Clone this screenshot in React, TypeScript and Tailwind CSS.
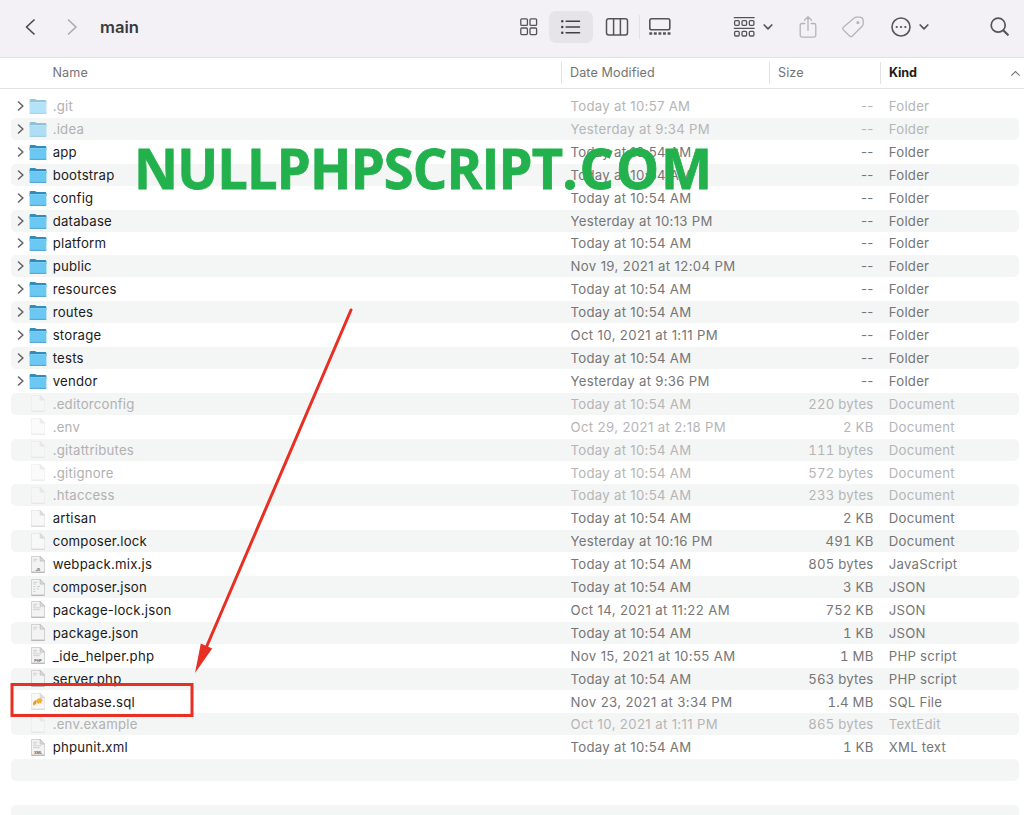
import React from "react";

type Badge = "" | "JS" | "JSON" | "LOCK" | "PHP" | "XML" | "SQL" | "CODE" | "DOC";
type Entry = {
  name: string;
  date: string;
  size: string;
  kind: string;
  dim?: boolean;
  badge?: Badge;
};

const T = "Today at 10:54 AM";

const entries: Entry[] = [
  { name: ".git", date: "Today at 10:57 AM", size: "--", kind: "Folder", dim: true },
  { name: ".idea", date: "Yesterday at 9:34 PM", size: "--", kind: "Folder", dim: true },
  { name: "app", date: T, size: "--", kind: "Folder" },
  { name: "bootstrap", date: T, size: "--", kind: "Folder" },
  { name: "config", date: T, size: "--", kind: "Folder" },
  { name: "database", date: "Yesterday at 10:13 PM", size: "--", kind: "Folder" },
  { name: "platform", date: T, size: "--", kind: "Folder" },
  { name: "public", date: "Nov 19, 2021 at 12:04 PM", size: "--", kind: "Folder" },
  { name: "resources", date: T, size: "--", kind: "Folder" },
  { name: "routes", date: T, size: "--", kind: "Folder" },
  { name: "storage", date: "Oct 10, 2021 at 1:11 PM", size: "--", kind: "Folder" },
  { name: "tests", date: T, size: "--", kind: "Folder" },
  { name: "vendor", date: "Yesterday at 9:36 PM", size: "--", kind: "Folder" },
  { name: ".editorconfig", date: T, size: "220 bytes", kind: "Document", dim: true },
  { name: ".env", date: "Oct 29, 2021 at 2:18 PM", size: "2 KB", kind: "Document", dim: true },
  { name: ".gitattributes", date: T, size: "111 bytes", kind: "Document", dim: true },
  { name: ".gitignore", date: T, size: "572 bytes", kind: "Document", dim: true },
  { name: ".htaccess", date: T, size: "233 bytes", kind: "Document", dim: true },
  { name: "artisan", date: T, size: "2 KB", kind: "Document" },
  { name: "composer.lock", date: "Yesterday at 10:16 PM", size: "491 KB", kind: "Document" },
  { name: "webpack.mix.js", date: T, size: "805 bytes", kind: "JavaScript", badge: "JS" },
  { name: "composer.json", date: T, size: "3 KB", kind: "JSON", badge: "JSON" },
  { name: "package-lock.json", date: "Oct 14, 2021 at 11:22 AM", size: "752 KB", kind: "JSON", badge: "LOCK" },
  { name: "package.json", date: T, size: "1 KB", kind: "JSON", badge: "DOC" },
  { name: "_ide_helper.php", date: "Nov 15, 2021 at 10:55 AM", size: "1 MB", kind: "PHP script", badge: "PHP" },
  { name: "server.php", date: T, size: "563 bytes", kind: "PHP script", badge: "CODE" },
  { name: "database.sql", date: "Nov 23, 2021 at 3:34 PM", size: "1.4 MB", kind: "SQL File", badge: "SQL" },
  { name: ".env.example", date: "Oct 10, 2021 at 1:11 PM", size: "865 bytes", kind: "TextEdit", dim: true },
  { name: "phpunit.xml", date: T, size: "1 KB", kind: "XML text", badge: "XML" },
];

function FolderIcon({ dim }: { dim?: boolean }) {
  return (
    <svg width="18" height="17" viewBox="0 0 18 17" className={dim ? "opacity-50" : ""}>
      <path d="M.6 2.2Q.6 1 1.8 1h4.1q.6 0 1 .4l.6.6h8.700q1.200 0 1.200 1.200V6H.6Z" fill="#2f8dbd" />
      <path d="M.6 4.300h16.800v10.400q0 1-1 1H1.600q-1 0-1-1Z" fill="#6ac8f3" />
      <path d="M.6 4.500h16.800" stroke="#8fd7f8" strokeWidth=".7" />
      <path d="M.7 15.400h16.600" stroke="#4b9fca" strokeWidth=".9" />
    </svg>
  );
}

function FileIcon({ badge = "", dim }: { badge?: Badge; dim?: boolean }) {
  const detailed = badge !== "" && badge !== "SQL";
  return (
    <svg width="16" height="19" viewBox="0 0 16 19" className={dim ? "opacity-50" : ""}>
      <path
        d="M1.500 1.500h8.800l4.200 4.500v11.200H1.500Z"
        fill={detailed ? "#f3f3f3" : "#f8f8f8"}
        stroke={detailed ? "#c9c9c9" : "#e4e4e4"}
        strokeWidth=".8"
      />
      <path d="M1.300 17.300h13.400" stroke={detailed ? "#a5a5a5" : "#cfcfcf"} strokeWidth=".8" />
      <path d="M10.200 1.500v4.600h4.300Z" fill="#dedede" stroke={detailed ? "#b5b5b5" : "#d2d2d2"} strokeWidth=".7" />
      {detailed && <path d="M3.200 4.300h4M3.200 6h3" stroke="#c2c2c2" strokeWidth=".7" />}
      {(badge === "LOCK" || badge === "PHP" || badge === "XML") && (
        <path d="M3.200 7.800h8M3.200 9.600h6.500" stroke="#c9c9c9" strokeWidth=".8" />
      )}
      {badge === "JSON" && <path d="M3.400 8.500h2M3.400 11h2M3.400 13.500h2M7 8.500h3M7 11h2" stroke="#c4c4c4" strokeWidth=".8" />}
      {(badge === "JS" || badge === "PHP" || badge === "XML") && (
        <text
          x="8"
          y="15.600"
          textAnchor="middle"
          fontSize="3.600"
          fontWeight="700"
          fill="#666666"
          fontFamily="Inter, sans-serif"
        >
          {badge}
        </text>
      )}
      {badge === "SQL" && (
        <>
          <path d="M3 12.600q-.2-3.600 3-4.700l1 1.300-.9 1.800.4 1.600-1.500-.4-.9 1.500Z" fill="#f29a1f" />
          <path d="M6.300 8.300q2-3 5-1.700l1.700 1.900-1.500.5-.3 2.700-1.400-1.300-1.400 1.500-1.400-1.700Z" fill="#f5b131" />
          <path d="M7 9.500l1.500 1.500M10 8.500l1 1" stroke="#e38b1c" strokeWidth=".8" />
        </>
      )}
    </svg>
  );
}

function Row({ entry, index }: { entry?: Entry; index: number }) {
  const stripe = index % 2 === 1 ? "bg-[#f4f5f5]" : "";
  const folder = entry?.kind === "Folder";
  const meta = entry?.dim ? "text-[#b5b5b5]" : "text-[#767676]";
  const dateTracking = entry?.date.includes("2021") ? "tracking-[0.360px]" : "tracking-[0.290px]";
  return (
    <div className="h-[22.910px] shrink-0">
      <div className={`flex h-[22px] items-center rounded-[5px] ${stripe}`}>
        {entry && (
          <>
            <div className="flex w-[18px] items-center pl-[6px]">
              {folder && (
                <svg width="8" height="12" viewBox="0 0 8 12" fill="none" stroke="#646467" strokeWidth="1.600" strokeLinecap="round" strokeLinejoin="round">
                  <path d="M1.500 2l4.400 4-4.400 4" />
                </svg>
              )}
            </div>
            <div className="flex w-[23.700px] justify-start">
              {folder ? (
                <span className="pt-px">
                  <FolderIcon dim={entry.dim} />
                </span>
              ) : (
                <span className="pl-[1px]">
                  <FileIcon badge={entry.badge} dim={entry.dim} />
                </span>
              )}
            </div>
            <div className={`w-[517.800px] tracking-[0.220px] ${entry.dim ? "text-[#b1b1b1]" : "text-[#1b1b1b]"}`}>{entry.name}</div>
            <div className={`w-[203px] ${dateTracking} ${meta}`}>{entry.date}</div>
            <div className={`w-[100px] text-right tracking-[0.200px] ${folder ? "" : "tabular-nums"} ${meta}`}>{entry.size}</div>
            <div className={`pl-[15.300px] tracking-[0.230px] ${meta}`}>{entry.kind}</div>
          </>
        )}
      </div>
    </div>
  );
}

function ChevronDown() {
  return (
    <svg width="10" height="8" viewBox="0 0 10 8" fill="none" stroke="#555459" strokeWidth="1.700" strokeLinecap="round" strokeLinejoin="round">
      <path d="M1.200 2l3.800 3.800L8.800 2" />
    </svg>
  );
}

function Toolbar() {
  return (
    <header className="flex h-[57px] shrink-0 items-center bg-[#f3f1f6] pb-[3px]">
      <svg className="ml-[24px]" width="12" height="18" viewBox="0 0 12 18" fill="none" stroke="#4b4a4f" strokeWidth="1.700" strokeLinecap="round" strokeLinejoin="round">
        <path d="M10 2L2.500 9l7.500 7" />
      </svg>
      <svg className="ml-[30px]" width="12" height="18" viewBox="0 0 12 18" fill="none" stroke="#acabb0" strokeWidth="1.700" strokeLinecap="round" strokeLinejoin="round">
        <path d="M2.500 2l7.500 7-7.500 7" />
      </svg>
      <h1 className="ml-[22px] w-[419px] text-[16.600px] font-semibold leading-5 text-[#39383d]">main</h1>

      <svg width="20" height="20" viewBox="0 0 20 20" fill="none" stroke="#555459" strokeWidth="1.300">
        <rect x="1.800" y="1.800" width="6.600" height="6.600" rx="1" />
        <rect x="11" y="1.800" width="6.600" height="6.600" rx="1" />
        <rect x="1.800" y="11" width="6.600" height="6.600" rx="1" />
        <rect x="11" y="11" width="6.600" height="6.600" rx="1" />
      </svg>
      <div className="ml-[10px] flex h-[32px] w-[44px] items-center justify-center rounded-[7px] bg-[#e6e4e9]">
        <svg width="22" height="18" viewBox="0 0 22 18" fill="none" stroke="#414045" strokeWidth="1.600" strokeLinecap="round">
          <path d="M6.200 3.200h13.300M6.200 9h13.300M6.200 14.800h13.300" />
          <path d="M2.200 3.200h.1M2.200 9h.1M2.200 14.800h.1" strokeWidth="2.400" />
        </svg>
      </div>
      <svg className="ml-[12px]" width="24" height="20" viewBox="0 0 24 20" fill="none" stroke="#555459" strokeWidth="1.500">
        <rect x="1.500" y="1.700" width="21" height="16.300" rx="2.200" />
        <path d="M8.600 2v16M15.400 2v16" />
      </svg>
      <div className="ml-[10px] h-[24px] w-px bg-[#e3e1e6]" />
      <svg className="ml-[8px]" width="24" height="20" viewBox="0 0 24 20" fill="none" stroke="#555459" strokeWidth="1.600">
        <rect x="1.800" y="1.800" width="20" height="11" rx="1.800" />
        <path d="M1.300 16.500h21.200" strokeWidth="2.500" strokeDasharray="2.900 1.670" />
      </svg>
      <svg className="ml-[60px]" width="24" height="22" viewBox="0 0 24 22" fill="none" stroke="#555459" strokeWidth="1.300">
        <path d="M1.800 1.600h20.800M1.800 12.300h20.800" />
        <rect x="2.600" y="4.700" width="4.600" height="4.600" rx="1" />
        <rect x="10" y="4.700" width="4.600" height="4.600" rx="1" />
        <rect x="17.300" y="4.700" width="4.600" height="4.600" rx="1" />
        <rect x="2.600" y="15.400" width="4.600" height="4.600" rx="1" />
        <rect x="10" y="15.400" width="4.600" height="4.600" rx="1" />
        <rect x="17.300" y="15.400" width="4.600" height="4.600" rx="1" />
      </svg>
      <div className="ml-[7px]"><ChevronDown /></div>
      <svg className="ml-[25px]" width="20" height="24" viewBox="0 0 20 24" fill="none" stroke="#b5b3b8" strokeWidth="1.300" strokeLinecap="round" strokeLinejoin="round">
        <path d="M6.800 8.500H4Q2.200 8.500 2.200 10.300v10q0 1.800 1.800 1.800h12q1.800 0 1.800-1.800v-10q0-1.800-1.800-1.800h-2.800M10 15.300V1.800M6.500 5.200L10 1.800l3.500 3.400" />
      </svg>
      <svg className="ml-[23px]" width="24" height="24" viewBox="0 0 24 24" fill="none" stroke="#b5b3b8" strokeWidth="1.300" strokeLinejoin="round">
        <path d="M13.200 3.100q.9-.9 2.200-.9h3.100q3.700 0 3.700 3.700v2.900q0 1.300-.9 2.200L11.400 21q-1.400 1.300-2.800 0L2.300 14.900q-1.300-1.300 0-2.600Z" />
        <circle cx="16.900" cy="7.600" r="1" />
      </svg>
      <svg className="ml-[25px]" width="22" height="22" viewBox="0 0 22 22" fill="none" stroke="#555459" strokeWidth="1.600">
        <circle cx="11" cy="11" r="9" />
        <path d="M6.700 11h.1M11 11h.1M15.300 11h.1" strokeWidth="2.200" strokeLinecap="round" />
      </svg>
      <div className="ml-[7px]"><ChevronDown /></div>
      <svg className="ml-[59.500px]" width="22" height="22" viewBox="0 0 22 22" fill="none" stroke="#555459" strokeWidth="1.700" strokeLinecap="round">
        <circle cx="9.200" cy="9.200" r="7" />
        <path d="M14.500 14.500l4.300 4.300" strokeWidth="2.200" />
      </svg>
    </header>
  );
}

function ColumnHeader() {
  return (
    <div className="flex h-[32px] shrink-0 items-center border-y border-[#e2e2e3] text-[12.600px] tracking-[0.100px] text-[#747474]">
      <div className="w-[561px] pl-[52.500px]">Name</div>
      <div className="flex h-[22px] w-[208px] items-center border-l border-[#e2e2e2] pl-[8px]">Date Modified</div>
      <div className="flex h-[22px] w-[111px] items-center border-l border-[#e2e2e2] pl-[8px]">Size</div>
      <div className="flex h-[22px] flex-1 items-center justify-between border-l border-[#e2e2e2] pl-[8px] pr-[3px]">
        <span className="font-bold tracking-[-0.100px] text-[#1c1c1c]">Kind</span>
        <svg width="11" height="7" viewBox="0 0 11 7" fill="none" stroke="#747474" strokeWidth="1.100">
          <path d="M1.300 5.700l4.200-4.200 4.200 4.200" />
        </svg>
      </div>
    </div>
  );
}

export default function App() {
  return (
    <main className="relative flex h-[815px] w-[1024px] flex-col overflow-hidden bg-white font-['Inter',sans-serif]">
      <Toolbar />
      <ColumnHeader />
      <section className="flex flex-1 flex-col overflow-hidden pl-[11px] pr-[5px] pt-[6px] text-[13.200px] leading-[22px]">
        {Array.from({ length: 32 }, (_, i) => (
          <Row key={i} index={i} entry={entries[i]} />
        ))}
      </section>

      <div className="absolute left-[134px] top-[133px] origin-left scale-x-[0.985] whitespace-nowrap font-['Open_Sans',sans-serif] text-[55px] font-bold leading-[70px] text-[#22b14c] [-webkit-text-stroke:0.800px_#22b14c]">
        <span className="tracking-[-0.850px]">NULLPHPSCRIPT</span>
        <span className="tracking-[1.900px]">.COM</span>
      </div>

      <svg className="pointer-events-none absolute left-0 top-0" width="1024" height="815" viewBox="0 0 1024 815">
        <path d="M351 310L206 648" stroke="#e82f23" strokeWidth="3" strokeLinecap="round" />
        <path d="M195 673l5.800-29.500 11.400 4.900Z" fill="#e82f23" />
        <rect x="12" y="684.500" width="180" height="31" fill="none" stroke="#e82f23" strokeWidth="3" />
      </svg>
    </main>
  );
}
